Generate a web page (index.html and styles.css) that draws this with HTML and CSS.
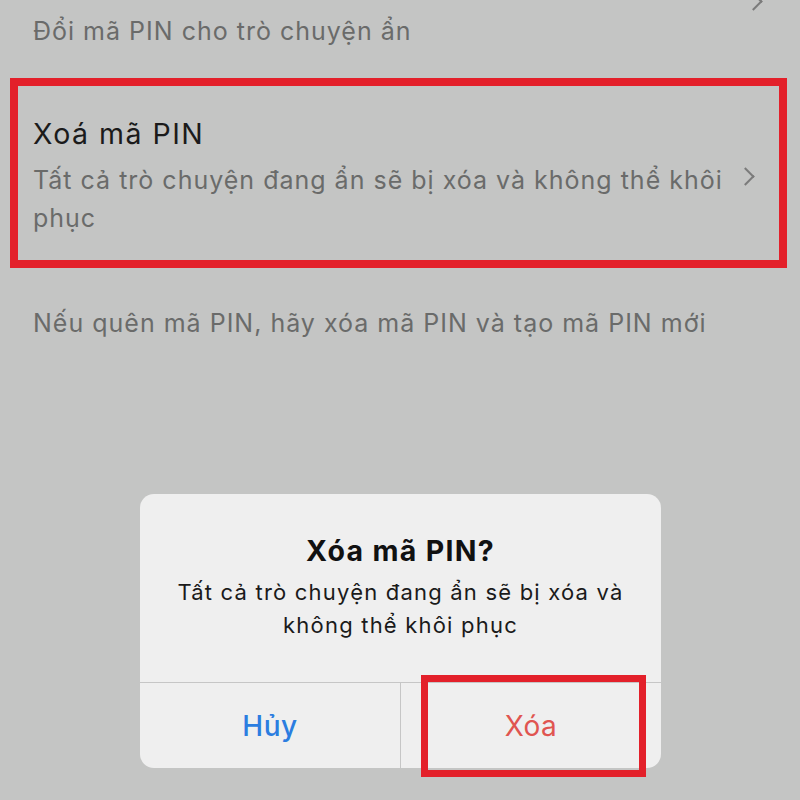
FILE: index.html
```html
<!DOCTYPE html>
<html lang="vi">
<head>
  <meta charset="UTF-8">
  <title>Xóa mã PIN</title>
  <meta name="viewport" content="width=device-width, initial-scale=1.0">
  <link rel="stylesheet" href="styles.css">
</head>
<body>
  <div class="screen">
    <div class="row row-top">
      <p class="row-sub">Đổi mã PIN cho trò chuyện ẩn</p>
      <span class="chev chev-top"></span>
    </div>

    <div class="row row-mark">
      <div class="row-text">
        <h2 class="row-title">Xoá mã PIN</h2>
        <p class="row-sub">Tất cả trò chuyện đang ẩn sẽ bị xóa và không thể khôi phục</p>
      </div>
      <span class="chev"></span>
    </div>

    <p class="note">Nếu quên mã PIN, hãy xóa mã PIN và tạo mã PIN mới</p>

    <!-- hộp thoại xác nhận -->
    <div class="alert">
      <div class="alert-body">
        <h3>Xóa mã PIN?</h3>
        <p>Tất cả trò chuyện đang ẩn sẽ bị xóa và<br>không thể khôi phục</p>
      </div>
      <div class="alert-actions">
        <button type="button" class="btn btn-cancel">Hủy</button>
        <button type="button" class="btn btn-delete">Xóa</button>
      </div>
    </div>
    <div class="mark-btn"></div>
  </div>
</body>
</html>
```

FILE: styles.css
```css
:root {
  --bg: #c4c5c4;
  --text: #1b1b1b;
  --muted: #6a6b6a;
  --mark: #e3202a;
  --sheet: #efefef;
  --line: #c6c6c6;
  --blue: #2b7de0;
  --red: #e05550;
}
body {
  margin: 0;
  background: var(--bg);
  font-family: Inter, 'Noto Sans', sans-serif;
  color: var(--text);
}
.screen {
  position: relative;
  width: 800px;
  height: 800px;
  overflow: hidden;
}
.row {
  display: flex;
  align-items: center;
  justify-content: space-between;
}
.row-top {
  align-items: flex-start;
  padding: 12px 38px 0 33px;
  height: 55px;
}
.row-sub {
  margin: 0;
  font-size: 25px;
  letter-spacing: 1px;
  line-height: 38px;
  color: var(--muted);
}
.chev {
  width: 11px;
  height: 11px;
  border-top: 2px solid #7b7b7b;
  border-right: 2px solid #7b7b7b;
  transform: rotate(45deg);
  flex: none;
  margin-right: 2px;
}
.chev-top {
  margin-top: -17px;
}
.row-mark {
  margin: 11px 13px 0 10px;
  border: 8px solid var(--mark);
  padding: 29px 25px 23px 15px;
}
.row-text {
  max-width: 700px;
}
.row-title {
  margin: 0 0 8px 0;
  font-size: 28.5px;
  letter-spacing: 1.5px;
  font-weight: 400;
  line-height: 38px;
  color: var(--text);
}
.note {
  margin: 36px 0 0 33px;
  font-size: 25px;
  letter-spacing: 1px;
  line-height: 38px;
  color: var(--muted);
}
.alert {
  position: absolute;
  left: 140px;
  top: 494px;
  width: 521px;
  height: 274px;
  background: var(--sheet);
  border-radius: 14px;
  display: flex;
  flex-direction: column;
  overflow: hidden;
}
.alert-body {
  flex: 1;
  text-align: center;
  padding-top: 38px;
  border-bottom: 1px solid var(--line);
}
.alert-body h3 {
  margin: 0;
  font-size: 28.5px;
  font-weight: 700;
  letter-spacing: 1.3px;
  line-height: 38px;
  color: #111;
}
.alert-body p {
  margin: 6px 0 0 0;
  font-size: 22px;
  letter-spacing: 1.2px;
  line-height: 33px;
  color: #1a1a1a;
}
.alert-actions {
  display: flex;
  height: 85px;
}
.btn {
  flex: 1;
  background: none;
  border: none;
  font-family: inherit;
  font-size: 28px;
  letter-spacing: 0.5px;
  padding: 0;
}
.btn-cancel {
  color: var(--blue);
  font-weight: 500;
  border-right: 1px solid var(--line);
}
.btn-delete {
  color: var(--red);
}
.mark-btn {
  position: absolute;
  left: 421px;
  top: 675px;
  width: 211px;
  height: 88px;
  border: 7px solid var(--mark);
}
```
